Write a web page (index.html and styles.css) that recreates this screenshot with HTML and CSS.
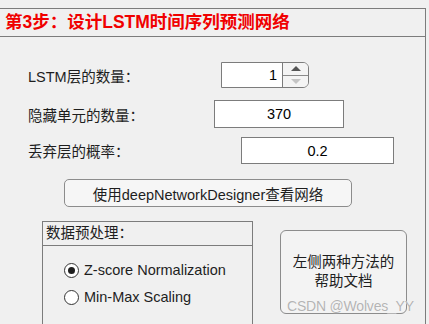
FILE: index.html
```html
<!DOCTYPE html>
<html>
<head>
	<meta charset="utf-8">
	<meta name="viewport" content="width=device-width, initial-scale=1">
	<title>LSTM</title>
	<link rel="stylesheet" href="styles.css">
</head>
<body>

<div class="stepPanel">
  <div class="stepTitle">第3步：设计LSTM时间序列预测网络</div>

  <div class="stepBody">
    <div class="row row1">
      <div class="label lbl1">LSTM层的数量：</div>
      <div class="spinner">
        <div class="spinValue">1</div>
        <div class="spinArrows">
          <div class="arrowUp"><span class="triUp"></span></div>
          <div class="arrowDown"><span class="triDown"></span></div>
        </div>
      </div>
    </div>

    <div class="row row2">
      <div class="label lbl2">隐藏单元的数量：</div>
      <div class="field field2">370</div>
    </div>

    <div class="row row3">
      <div class="label lbl3">丢弃层的概率：</div>
      <div class="field field3">0.2</div>
    </div>

    <div class="btnRow">
      <button class="pushBtn">使用deepNetworkDesigner查看网络</button>
    </div>

    <div class="bottomRow">
      <div class="groupBox">
        <div class="groupTitle">数据预处理：</div>
        <div class="groupBody">
          <label class="radio">
            <span class="circle checked"></span>
            Z-score Normalization
          </label>
          <label class="radio">
            <span class="circle"></span>
            Min-Max Scaling
          </label>
        </div>
      </div>

      <button class="helpBtn">左侧两种方法的<br>帮助文档</button>
    </div>
  </div>
</div>

<div class="watermark">CSDN @Wolves_YY</div>

</body>
</html>
```

FILE: styles.css
```css
html, body {
  height: 324px;
}

body {
  margin: 0;
  background-color: #f0f0f0;
  font-family: "Liberation Sans", "Noto Sans CJK SC", sans-serif;
  font-size: 14.5px;
  color: #1e1e1e;
  overflow: hidden;
  position: relative;
}

.stepPanel {
  margin-top: 8px;
  margin-left: -1px;
  width: 425px;
  height: 315px;
  border: 1px solid #7c7c7c;
  border-bottom: none;
  overflow: hidden;
}

.stepTitle {
  height: 27px;
  line-height: 27px;
  padding-left: 5px;
  border-bottom: 1px solid #7c7c7c;
  color: #f00000;
  font-weight: bold;
  font-size: 17.5px;
}

.stepBody {
  padding-left: 1px;
}

.row {
  display: flex;
  align-items: center;
}

.row1 { margin-top: 25px; height: 26px; }
.row2 { margin-top: 12px; height: 28px; }
.row3 { margin-top: 9px; height: 27px; }

.label {
  padding-left: 27px;
  box-sizing: border-box;
}
.lbl1 { width: 220px; }
.lbl2 { width: 213px; }
.lbl3 { width: 240px; }

/* spinner */
.spinner {
  display: flex;
  width: 88px;
  height: 26px;
  box-sizing: border-box;
  border: 1px solid #7c7c7c;
  border-radius: 0 6px 6px 0;
  background-color: #fff;
}
.spinValue {
  width: 60px;
  text-align: right;
  padding-right: 5px;
  box-sizing: border-box;
  line-height: 24px;
  color: #000;
}
.spinArrows {
  flex: 1;
  display: flex;
  flex-direction: column;
  border-left: 1px solid #7c7c7c;
  background-color: #f4f4f4;
  border-radius: 0 5px 5px 0;
}
.arrowUp, .arrowDown {
  flex: 1;
  display: flex;
  align-items: center;
  justify-content: center;
}
.arrowUp { border-bottom: 1px solid #8a8a8a; }
.triUp {
  width: 0; height: 0;
  border-left: 5px solid transparent;
  border-right: 5px solid transparent;
  border-bottom: 5px solid #555;
}
.triDown {
  width: 0; height: 0;
  border-left: 5px solid transparent;
  border-right: 5px solid transparent;
  border-top: 5px solid #c4c4c4;
}

.field {
  height: 100%;
  box-sizing: border-box;
  border: 1px solid #7c7c7c;
  background-color: #fff;
  display: flex;
  align-items: center;
  justify-content: center;
  color: #000;
}
.field2 { width: 130px; }
.field3 { width: 153px; }

/* button */
.btnRow {
  margin-top: 15px;
  padding-left: 63px;
}
.pushBtn {
  width: 288px;
  height: 28px;
  border: 1px solid #8c8c8c;
  border-radius: 5px;
  background-color: #f6f6f6;
  font-family: inherit;
  font-size: 14.5px;
  color: #1e1e1e;
  padding: 0;
}

.bottomRow {
  margin-top: 14px;
  display: flex;
  align-items: flex-start;
}

.groupBox {
  margin-left: 41px;
  width: 211px;
  height: 110px;
  box-sizing: border-box;
  border: 1px solid #7c7c7c;
}
.groupTitle {
  height: 23px;
  line-height: 23px;
  padding-left: 3px;
  border-bottom: 1px solid #7c7c7c;
}
.groupBody {
  padding-top: 16px;
  padding-left: 21px;
  display: flex;
  flex-direction: column;
  gap: 11px;
}
.radio {
  display: flex;
  align-items: center;
  gap: 5px;
  height: 16px;
}
.circle {
  width: 15px;
  height: 15px;
  box-sizing: border-box;
  border: 1px solid #333;
  border-radius: 50%;
  background-color: #fff;
  display: flex;
  align-items: center;
  justify-content: center;
}
.circle.checked::after {
  content: "";
  width: 7px;
  height: 7px;
  border-radius: 50%;
  background-color: #1e1e1e;
}

.helpBtn {
  margin-left: 27px;
  margin-top: 9px;
  width: 127px;
  height: 84px;
  border: 1px solid #8c8c8c;
  border-radius: 6px;
  background-color: #f3f3f3;
  font-family: inherit;
  font-size: 14.5px;
  line-height: 19px;
  color: #1e1e1e;
  padding: 0;
}

.watermark {
  position: absolute;
  left: 287px;
  top: 298px;
  font-size: 14px;
  color: #b4b4b4;
  text-shadow: 0 0 1px #fff;
  letter-spacing: -0.2px;
}
```
